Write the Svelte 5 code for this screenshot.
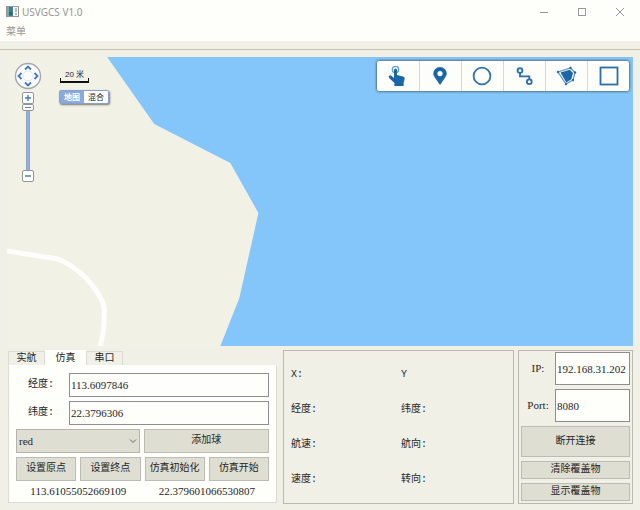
<script>
  let longitude = $state('113.6097846');
  let latitude = $state('22.3796306');
  let ip = $state('192.168.31.202');
  let port = $state('8080');
  const tabs = ['实航', '仿真', '串口'];
  let active = $state('仿真');
  const readings = ['X:', 'Y', '经度:', '纬度:', '航速:', '航向:', '速度:', '转向:'];
</script>

<div class="window">
  <header class="title">
    <svg class="logo" width="13" height="11" viewBox="0 0 13 11">
      <rect x=".5" y=".5" width="12" height="10" fill="#f4f6f2" stroke="#92989a" />
      <rect x="1" y="1" width="6" height="9" fill="#3f7f8c" />
      <rect x="1" y="1" width="2" height="9" fill="#7fa8b4" />
      <rect x="3" y="6" width="3" height="3" fill="#2f6b50" />
      <path d="M10 2v4M10 7v2" stroke="#9aa" stroke-width="1.5" />
    </svg>
    <h1>USVGCS V1.0</h1>
    <div class="controls">
      <button aria-label="最小化"><svg width="10" height="10"><path d="M1 5.5h8" /></svg></button>
      <button aria-label="最大化"><svg width="10" height="10"><rect x="1.5" y="1.5" width="7" height="7" /></svg></button>
      <button aria-label="关闭"><svg width="10" height="10"><path d="M1 1l8 8M9 1l-8 8" /></svg></button>
    </div>
  </header>
  <nav class="menu"><button>菜单</button></nav>
  <div class="strip"></div>

  <main>
    <section class="map" aria-label="地图">
      <svg class="chart" viewBox="0 0 625 289" preserveAspectRatio="none">
        <path d="M100 0L147 67L223 106L251 156L232 241L213 289H625V0Z" fill="#84c5fa" />
        <path d="M0 194L51 202Q64 207 79 221Q94 238 97 250Q98 272 93 289" fill="none" stroke="#fdfdfb" stroke-width="5" />
      </svg>
      <div class="zoomer">
        <svg width="28" height="28" viewBox="0 0 28 28">
          <circle cx="14" cy="14" r="12.5" fill="#fbfbfa" stroke="#a3a6ae" stroke-width="1.4" />
          <circle cx="14" cy="14" r="5" fill="none" stroke="#e3e5ec" />
          <path d="M11 7.5l3-3 3 3M11 20.5l3 3 3-3M7.5 11l-3 3 3 3M20.5 11l3 3-3 3" fill="none" stroke="#3f78bd" stroke-width="1.8" />
        </svg>
        <button aria-label="放大"><svg width="8" height="8"><path d="M1 4h6M4 1v6" /></svg></button>
        <div class="rail"><span class="thumb"></span></div>
        <button aria-label="缩小"><svg width="8" height="8"><path d="M1 4h6" /></svg></button>
      </div>
      <div class="scale">20 米</div>
      <div class="kind"><button class="on">地图</button><button>混合</button></div>
      <div class="tools">
        <button aria-label="拖动"><svg width="22" height="22" viewBox="0 0 22 22">
          <circle cx="8.5" cy="4.5" r="3.2" fill="none" stroke="#639bc5" stroke-width="1.3" />
          <path d="M7 5a1.5 1.5 0 0 1 3 0V10l6 1.4q2 .6 1.7 2.4L16.6 18v3H7.4V18L2.2 12.9Q1 11.2 2.4 10.4q1-.5 2.2.5L7 12.9Z" fill="#1b67a5" />
        </svg></button>
        <button aria-label="标记"><svg width="22" height="22" viewBox="0 0 22 22">
          <path fill-rule="evenodd" d="M10 20L5 12.8Q3.2 10.3 3.2 8.8a6.8 6.8 0 0 1 13.6 0q0 1.500-1.800 4ZM10 6a2.600 2.600 0 1 0 0 5.200A2.600 2.600 0 0 0 10 6Z" fill="#1b67a5" />
        </svg></button>
        <button aria-label="圆"><svg width="22" height="22" viewBox="0 0 22 22"><circle cx="10" cy="11" r="8.4" fill="none" stroke="#2f75ae" stroke-width="1.8" /></svg></button>
        <button aria-label="折线"><svg width="22" height="22" viewBox="0 0 22 22" fill="none" stroke="#286fa9" stroke-width="1.8">
          <circle cx="6" cy="5.5" r="2.4" /><circle cx="15.3" cy="16.7" r="2.4" /><path d="M6 8v3.4h9.3v3" />
        </svg></button>
        <button aria-label="多边形"><svg width="22" height="22" viewBox="0 0 22 22">
          <path d="M2 7L14.5 3l4.5 4.5-2 7.5-7 4Z" fill="none" stroke="#5b93be" stroke-width="1.2" />
          <path d="M4.5 7.5l9.3-2.8L17 8l-1.7 6.2-5 3.2Z" fill="#1b67a5" />
          <g fill="#2c6c9d"><circle cx="2" cy="7" r="1.2" /><circle cx="14.5" cy="3" r="1.2" /><circle cx="19" cy="7.5" r="1.2" /><circle cx="17" cy="15" r="1.2" /><circle cx="10" cy="19" r="1.2" /></g>
        </svg></button>
        <button aria-label="矩形"><svg width="22" height="22" viewBox="0 0 22 22"><rect x="2.5" y="2.5" width="17" height="17" fill="none" stroke="#2a70a9" stroke-width="1.8" /></svg></button>
      </div>
    </section>

    <div class="panels">
      <section class="left">
        <div class="tabs" role="tablist">
          {#each tabs as tab}
            <button role="tab" aria-selected={active === tab} class:active={active === tab} onclick={() => (active = tab)}>{tab}</button>
          {/each}
        </div>
        <div class="pane">
          <div class="field"><label for="lng">经度:</label><input id="lng" bind:value={longitude} /></div>
          <div class="field"><label for="lat">纬度:</label><input id="lat" bind:value={latitude} /></div>
          <div class="row">
            <div class="pick">
              <select aria-label="颜色"><option>red</option><option>blue</option></select>
              <svg width="8" height="8"><path d="M1 2.5l3 3 3-3" /></svg>
            </div>
            <button class="btn">添加球</button>
          </div>
          <div class="row">
            <button class="btn">设置原点</button>
            <button class="btn">设置终点</button>
            <button class="btn">仿真初始化</button>
            <button class="btn">仿真开始</button>
          </div>
          <div class="row result"><output>113.61055052669109</output><output>22.379601066530807</output></div>
        </div>
      </section>

      <section class="box status">
        {#each readings as reading}<span>{reading}</span>{/each}
      </section>

      <section class="box link">
        <div class="net"><label for="ip">IP:</label><input id="ip" bind:value={ip} /></div>
        <div class="net"><label for="port">Port:</label><input id="port" bind:value={port} /></div>
        <button class="btn tall">断开连接</button>
        <button class="btn">清除覆盖物</button>
        <button class="btn">显示覆盖物</button>
      </section>
    </div>
  </main>
</div>

<style>
  :global(body) { margin: 0; }
  * { box-sizing: border-box; }
  .window {
    display: flex;
    flex-direction: column;
    min-height: 100vh;
    background: #f0f0e6;
    color: #262626;
    font: 10px/14px "Liberation Mono", "Noto Sans CJK SC", monospace;
  }
  button, input, select {
    margin: 0;
    padding: 0;
    border: 0;
    border-radius: 0;
    background: none;
    color: inherit;
    font: inherit;
  }
  svg { display: block; flex: none; }
  .title {
    display: flex;
    align-items: center;
    height: 23px;
    padding-left: 6px;
    background: #fefefa;
  }
  h1 {
    flex: 1;
    margin: 0 0 0 3px;
    color: #969696;
    font: 10px/14px "Noto Sans", sans-serif;
  }
  .controls { display: flex; padding-right: 1px; }
  .controls button {
    display: grid;
    place-items: center;
    width: 38px;
    height: 23px;
  }
  .controls svg { fill: none; stroke: #999; }
  .menu {
    height: 18px;
    padding-left: 6px;
    background: #fefefa;
    color: #969696;
  }
  .menu button { display: block; line-height: 20px; }
  .strip { height: 9px; border-bottom: 1px solid #c3c3ac; }
  main {
    display: flex;
    flex: 1;
    flex-direction: column;
    gap: 4px;
    padding: 7px;
  }
  .map {
    position: relative;
    flex: 1;
    min-height: 200px;
    background: #f2f1e6;
    overflow: hidden;
  }
  .chart { position: absolute; width: 100%; height: 100%; }
  .zoomer {
    position: absolute;
    top: 5px;
    left: 7px;
    display: flex;
    flex-direction: column;
    align-items: center;
  }
  .zoomer button {
    display: grid;
    place-items: center;
    width: 12px;
    height: 12px;
    margin-top: 2px;
    border: 1px solid #92959c;
    border-radius: 2px;
    background: #fff;
  }
  .zoomer button svg { stroke: #3f78bd; stroke-width: 1.4; }
  .rail {
    width: 4px;
    height: 66px;
    background: #93ade0;
    border: 1px solid #91a3c4;
    border-width: 0 1px;
  }
  .zoomer .rail + button { margin: 0; }
  .thumb {
    display: block;
    width: 12px;
    height: 7px;
    margin-left: -5px;
    border: 1px solid #92959c;
    border-radius: 2px;
    background: linear-gradient(#5486be, #5486be) center / 6px 1px no-repeat #fff;
  }
  .scale {
    position: absolute;
    top: 12px;
    left: 53px;
    width: 29px;
    height: 14px;
    border: solid #111;
    border-width: 0 1px 2px;
    border-image: linear-gradient(transparent 75%, #111 75%) 1;
    font: 8px/11px "Liberation Sans", "Noto Sans CJK SC", sans-serif;
    text-align: center;
  }
  .kind {
    position: absolute;
    top: 33px;
    left: 52px;
    display: flex;
    border: 1px solid #8ba0ca;
    border-radius: 2px;
    background: #fff;
    box-shadow: 1px 1px 2px #777;
    font: 8px/12px "Noto Sans CJK SC", sans-serif;
  }
  .kind button { width: 24px; height: 12px; }
  .kind .on { background: #89a9df; color: #fff; font-weight: bold; }
  .tools {
    position: absolute;
    top: 4px;
    right: 4px;
    display: flex;
    border-radius: 2px;
    background: #fdfdf9;
    box-shadow: 0 0 3px #222;
  }
  .tools button {
    display: grid;
    place-items: center;
    width: 42px;
    height: 30px;
  }
  .tools button + button { border-left: 1px solid #d8d8cf; }
  .panels {
    display: grid;
    grid-template-columns: minmax(0, 276fr) minmax(0, 231fr) minmax(0, 119fr);
    height: 153px;
  }
  .left { margin-right: 6px; }
  .tabs { display: flex; align-items: flex-end; height: 15px; padding-left: 1px; }
  .tabs button {
    width: 37px;
    height: 14px;
    border: 1px solid #dcdcd2;
    border-bottom: 0;
    line-height: 13px;
  }
  .tabs .active {
    width: 41px;
    height: 15px;
    border-color: #fefefa;
    background: #fefefa;
  }
  .pane {
    display: flex;
    flex-direction: column;
    gap: 4px;
    height: 138px;
    margin-left: 1px;
    padding: 7px;
    border: 1px solid #dcdcd2;
    border-top-color: #fefefa;
    background: #fefefa;
  }
  .field { display: flex; }
  .field label { width: 53px; padding-left: 12px; line-height: 24px; }
  input, select, .result, .net label {
    font: 11px/14px "Liberation Serif", "Noto Sans CJK SC", serif;
  }
  input {
    min-width: 0;
    border: 1px solid #8e8e90;
    background: #fefefa;
  }
  .field input { flex: 1; height: 24px; padding-left: 1px; }
  .row { display: flex; gap: 4px; }
  .row > * { flex: 1 1 0; min-width: 0; }
  .btn {
    height: 24px;
    border: 1px solid #bcbcb4;
    background: #deded2;
    line-height: 20px;
    white-space: nowrap;
  }
  .pick { position: relative; }
  select {
    display: block;
    width: 100%;
    height: 24px;
    padding-left: 2px;
    border: 1px solid #b4b4ac;
    background: #deded2;
    appearance: none;
  }
  .pick svg {
    position: absolute;
    top: 8px;
    right: 3px;
    fill: none;
    stroke: #666;
    pointer-events: none;
  }
  .pane .result { line-height: 12px; text-align: center; }
  .box { border: 1px solid #b9b9b0; }
  .status {
    display: grid;
    grid-template-columns: 110px 1fr;
    grid-auto-rows: 35px;
    align-items: center;
    padding: 6px 7px;
  }
  .link {
    display: flex;
    flex-direction: column;
    gap: 4px;
    margin-left: 4px;
    padding: 1px 2px 2px;
  }
  .net { display: flex; }
  .net label {
    flex: none;
    width: 34px;
    line-height: 33px;
    text-align: center;
    white-space: nowrap;
  }
  .net input { flex: 1; height: 33px; padding-left: 1px; }
  .link .btn { height: 18px; line-height: 16px; }
  .link .tall { height: 31px; }
</style>
